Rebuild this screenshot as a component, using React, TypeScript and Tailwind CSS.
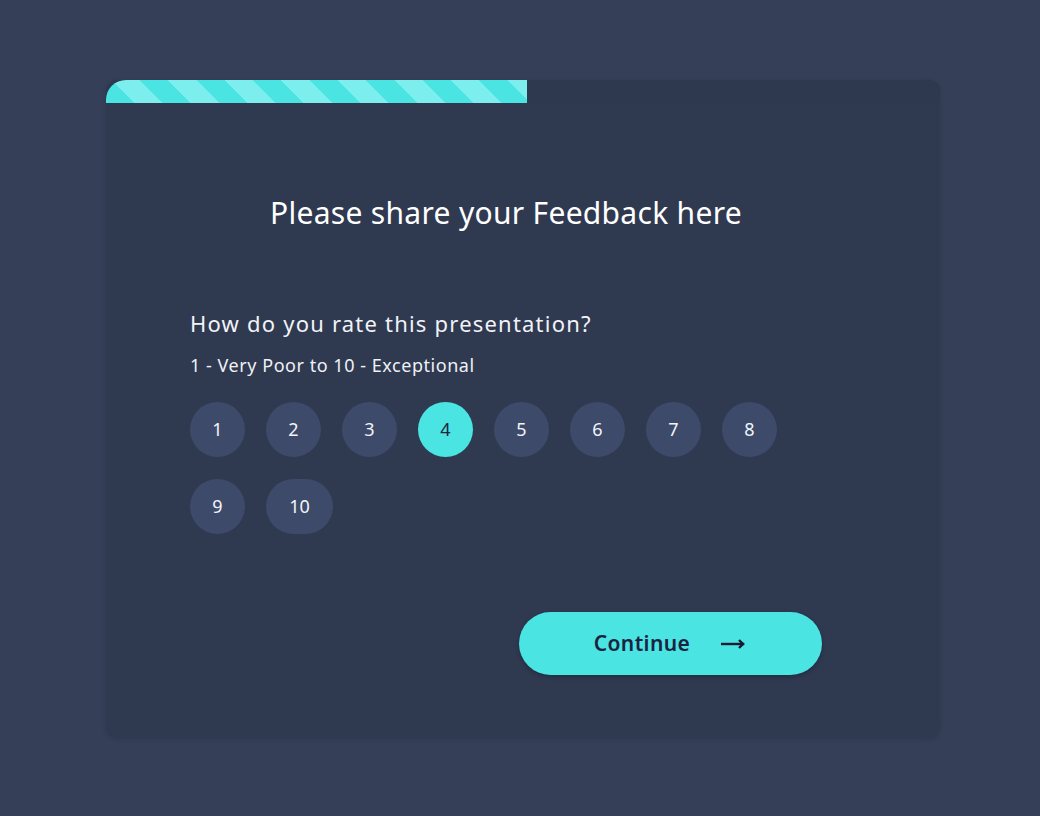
const scores = [1, 2, 3, 4, 5, 6, 7, 8, 9, 10]

export default function App() {
  const selected = 4

  return (
    <div className="min-h-[816px] w-full bg-[#353f58] pt-[80px] pl-[106px] font-['Noto_Sans',sans-serif]">
      <div className="w-[834px] h-[658px] rounded-[12px] bg-[#2f3950] shadow-[0_1px_4px_rgba(20,25,40,0.2)] overflow-hidden">
        {/* progress */}
        <div className="h-[23px] w-full bg-[#2e384f]">
          <div
            className="h-full w-[421px] rounded-tl-[20px] bg-[#4ae4e3]"
            style={{
              backgroundImage:
                'repeating-linear-gradient(45deg, #4ae4e3 0px, #4ae4e3 20px, #7beeed 20px, #7beeed 40px)',
            }}
          />
        </div>

        <div className="pl-[84px] w-[716px] pt-[93px]">
          <h1 className="text-center text-[30px] leading-[34px] text-white tracking-[0.01em]">
            Please share your Feedback here
          </h1>

          <p className="mt-[80px] text-[22px] leading-[26px] text-[#f1f3f7] tracking-[0.055em]">How do you rate this presentation?</p>
          <p className="mt-[18px] text-[18px] leading-[22px] text-[#eef1f6] tracking-[0.03em]">1 - Very Poor to 10 - Exceptional</p>

          <div className="mt-[26px] flex flex-wrap gap-x-[21px] gap-y-[22px] w-[600px]">
            {scores.map((n) => (
              <button
                key={n}
                className={`h-[55px] rounded-full flex items-center justify-center text-[18px] ${
                  n === 10 ? 'w-[67px]' : 'w-[55px]'
                } ${n === selected ? 'bg-[#4ae4e3] text-[#1c2440]' : 'bg-[#3d4a69] text-[#f2f4f8]'}`}
              >
                {n}
              </button>
            ))}
          </div>

          <div className="mt-[78px] flex justify-end">
            <button className="w-[303px] h-[63px] rounded-full bg-[#4ae4e3] flex items-center justify-center gap-[31px] text-[21px] font-semibold text-[#1a2340] tracking-[0.02em] shadow-[0_2px_4px_rgba(10,15,30,0.3)]">
              <span className="ml-[-2px]">Continue</span>
              <svg width="24" height="12" viewBox="0 0 24 12" fill="none" stroke="#141b30" strokeWidth="2.4" strokeLinecap="square">
                <line x1="1" y1="6" x2="22" y2="6" />
                <polyline points="18,2 22,6 18,10" strokeLinecap="butt" />
              </svg>
            </button>
          </div>
        </div>
      </div>
    </div>
  )
}
